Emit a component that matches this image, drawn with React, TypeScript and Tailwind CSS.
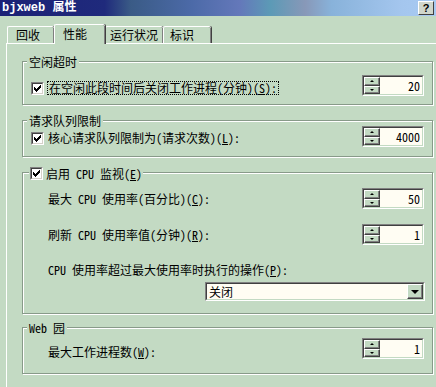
import React from "react";

const face = "bg-[#c3dac3]";

function Check() {
  return (
    <span className="flex h-[13px] w-[13px] shrink-0 border border-t-[#808080] border-l-[#808080] border-r-white border-b-white">
      <span className="flex flex-1 items-center justify-center border border-t-[#404040] border-l-[#404040] border-r-[#d4d0c8] border-b-[#d4d0c8] bg-white">
        <svg width="7" height="7" viewBox="0 0 7 7" shapeRendering="crispEdges">
          <rect x="0" y="2" width="1" height="3" fill="#000" />
          <rect x="1" y="3" width="1" height="3" fill="#000" />
          <rect x="2" y="4" width="1" height="3" fill="#000" />
          <rect x="3" y="3" width="1" height="3" fill="#000" />
          <rect x="4" y="2" width="1" height="3" fill="#000" />
          <rect x="5" y="1" width="1" height="3" fill="#000" />
          <rect x="6" y="0" width="1" height="3" fill="#000" />
        </svg>
      </span>
    </span>
  );
}

function SpinBtn({ up }: { up?: boolean }) {
  return (
    <div className={`flex flex-1 items-center justify-center border border-t-white border-l-white border-r-[#404040] border-b-[#404040] ${face} shadow-[inset_-1px_-1px_0_#808080]`}>
      {up ? (
        <span className="h-0 w-0 border-x-[2px] border-b-[2px] border-x-transparent border-b-black" />
      ) : (
        <span className="h-0 w-0 border-x-[2px] border-t-[2px] border-x-transparent border-t-black" />
      )}
    </div>
  );
}

function Spin({ value }: { value: string }) {
  return (
    <div className="flex h-[21px] w-[62px] shrink-0 border border-t-[#808080] border-l-[#808080] border-r-white border-b-white">
      <div className="flex flex-1 border border-t-[#404040] border-l-[#404040] border-r-[#c3dac3] border-b-[#c3dac3] bg-[#fffdf3]">
        <div className="flex w-[16px] flex-col">
          <SpinBtn up />
          <SpinBtn />
        </div>
        <div className="flex-1 pr-[2px] text-right leading-[17px]">{value}</div>
      </div>
    </div>
  );
}

function Group({ legend, className, legendClass, children }: { legend: React.ReactNode; className: string; legendClass?: string; children: React.ReactNode }) {
  return (
    <div className={`relative ml-[15px] w-[411px] border border-[#889a89] shadow-[inset_1px_1px_0_#fff,1px_1px_0_#fff] ${className}`}>
      <div className={`absolute flex h-[13px] items-center gap-[3px] ${face} ${legendClass ?? "-top-[7px] left-[4px] px-[2px]"}`}>{legend}</div>
      {children}
    </div>
  );
}

function Tab({ label, className }: { label: string; className: string }) {
  return (
    <div className={`flex items-center rounded-t-[2px] border-l border-t border-white ${face} shadow-[inset_-1px_0_0_#808080,1px_0_0_#404040] ${className}`}>
      {label}
    </div>
  );
}

export default function App() {
  return (
    <div className="h-[387px] w-[436px] overflow-hidden bg-[#c3dac3] font-['Noto_Sans_Mono_CJK_SC','Noto_Sans_CJK_SC',sans-serif] text-[12px] leading-[12px] text-black">
      <div className="flex h-[16px] items-center justify-between bg-[linear-gradient(90deg,#1b2176_0%,#1f2a7c_24%,#3a5b86_30%,#4c6aa8_44%,#6478ba_55%,#5c9ab6_62%,#8898b8_70%,#88b2da_76%,#a4c6ee_92%,#a8caf2_100%)] pl-[2px] pr-[2px]">
        <span className="font-['Liberation_Mono','Noto_Sans_CJK_SC',monospace] text-[12px] font-bold text-white">bjxweb 属性</span>
        <div className="mb-[1px] flex h-[14px] w-[16px] items-center justify-center border border-t-white border-l-white border-r-[#404040] border-b-[#404040] bg-[#d0d6cc] font-['Liberation_Sans',sans-serif] text-[11px] font-bold">?</div>
      </div>

      <div className="flex h-[27px] items-end pl-[7px]">
        <Tab label="回收" className="h-[17px] w-[47px] pl-[8px]" />
        <Tab label="性能" className="relative z-10 -mb-[1px] h-[20px] w-[51px] pb-[2px] pl-[8px]" />
        <Tab label="运行状况" className="h-[17px] w-[58px] pl-[4px]" />
        <Tab label="标识" className="h-[17px] w-[48px] pl-[6px]" />
      </div>

      <div className="ml-[6px] h-[400px] w-[440px] border-l border-t border-white">
        <Group legend="空闲超时" className="mt-[17px] h-[44px]">
          <div className="flex items-start justify-between pl-[8px] pr-[8px] pt-[13px]">
            <div className="mt-[6px] flex items-center gap-[3px]">
              <Check />
              <span className="border border-dotted border-black px-[1px] leading-[12px]">
                在空闲此段时间后关闭工作进程(分钟)(<u>S</u>):
              </span>
            </div>
            <Spin value="20" />
          </div>
        </Group>

        <Group legend="请求队列限制" className="mt-[15px] h-[37px]">
          <div className="flex items-start justify-between pl-[8px] pr-[8px] pt-[5px]">
            <div className="mt-[5px] flex h-[14px] items-center gap-[4px]">
              <Check />
              <span>核心请求队列限制为(请求次数)(<u>L</u>):</span>
            </div>
            <Spin value="4000" />
          </div>
        </Group>

        <Group
          legend={
            <>
              <Check />
              <span>启用 CPU 监视(<u>E</u>)</span>
            </>
          }
          legendClass="-top-[6px] left-[6px] px-[1px]"
          className="mt-[15px] h-[142px]"
        >
          <div className="mt-[15px] flex items-center justify-between pl-[25px] pr-[8px]">
            <span>最大 CPU 使用率(百分比)(<u>C</u>):</span>
            <Spin value="50" />
          </div>
          <div className="mt-[15px] flex items-center justify-between pl-[25px] pr-[8px]">
            <span>刷新 CPU 使用率值(分钟)(<u>R</u>):</span>
            <Spin value="1" />
          </div>
          <div className="mt-[19px] pl-[25px]">CPU 使用率超过最大使用率时执行的操作(<u>P</u>):</div>
          <div className="ml-[182px] mt-[6px] flex h-[19px] w-[220px] border border-t-[#808080] border-l-[#808080] border-r-white border-b-white">
            <div className="flex flex-1 items-center border border-t-[#404040] border-l-[#404040] border-r-[#c3dac3] border-b-[#c3dac3] bg-[#fffdf3]">
              <span className="flex-1 pl-[2px]">关闭</span>
              <div className={`flex h-full w-[16px] items-center justify-center border border-t-white border-l-white border-r-[#404040] border-b-[#404040] ${face} shadow-[inset_-1px_-1px_0_#808080]`}>
                <span className="h-0 w-0 border-x-[4px] border-t-[4px] border-x-transparent border-t-black" />
              </div>
            </div>
          </div>
        </Group>

        <Group legend="Web 园" className="mt-[13px] h-[47px]">
          <div className="flex items-start justify-between pl-[25px] pr-[8px] pt-[10px]">
            <span className="mt-[8px]">最大工作进程数(<u>W</u>):</span>
            <Spin value="1" />
          </div>
        </Group>
      </div>
    </div>
  );
}
